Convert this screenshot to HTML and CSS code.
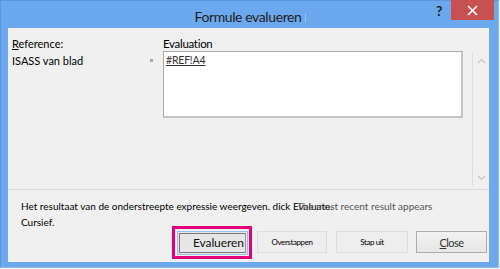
FILE: index.html
```html
<!DOCTYPE html>
<html lang="nl">
<head>
    <meta charset="UTF-8">
    <title>Formule evalueren</title>
    <link rel="stylesheet" href="styles.css">
</head>
<body>

<div class="window">
    <div class="titlebar">
        <div class="title">Formule evalueren<span class="caret"></span></div>
        <div class="help">?</div>
        <div class="close-x">
            <svg width="11" height="11" viewBox="0 0 11 11"><path d="M1 1 L10 10 M10 1 L1 10" stroke="#fff" stroke-width="1.6"/></svg>
        </div>
    </div>

    <div class="client">
        <div class="top">
            <div class="label"><u>R</u>eference:</div>
            <div></div>
            <div class="heading">Evaluation</div>
            <div></div>
            <div class="scroll">
                <svg width="9" height="6" viewBox="0 0 9 6"><path d="M1 5 L4.5 1.5 L8 5" stroke="#c4c4c4" stroke-width="1.2" fill="none"/></svg>
                <svg width="9" height="6" viewBox="0 0 9 6"><path d="M1 1 L4.5 4.5 L8 1" stroke="#c4c4c4" stroke-width="1.2" fill="none"/></svg>
            </div>

            <div class="label sheet">ISASS van blad</div>
            <div class="bullet"><span></span></div>
            <div class="evalbox"><u>#REF!A4</u></div>
        </div>

        <div class="message">
            Het resultaat van de onderstreepte expressie weergeven. dick Evaluate.<br>
            Cursief.
            <span class="ghost">The most recent result appears</span>
        </div>

        <div class="buttons">
            <div class="highlight">
                <button class="btn focus"><span>Evalueren</span></button>
            </div>
            <button class="btn small step-in">Overstappen</button>
            <button class="btn small step-out">Stap uit</button>
            <button class="btn close"><u>C</u>lose</button>
        </div>
    </div>
</div>

</body>
</html>
```

FILE: styles.css
```css
body {
    margin: 0;
    padding: 0;
    background-color: #f3f3f3;
    font-family: Lato, "Open Sans", sans-serif;
    font-size: 11px;
    color: #000;
}
.window {
    width: 497px;
    height: 266px;
    background-color: #6ca8ee;
    border: 1px solid #5b95dc;
    border-right-color: #8fbdf2;
    border-bottom-color: #8fbdf2;
}
.titlebar {
    height: 27px;
    display: flex;
    align-items: flex-start;
}
.title {
    flex: 1;
    padding-left: 64px;
    text-align: center;
    font-size: 14px;
    letter-spacing: -0.4px;
    line-height: 31px;
    color: #1e1e1e;
}
.caret {
    display: inline-block;
    width: 1px;
    height: 9px;
    margin-left: 4px;
    background-color: #9cc3ee;
}
.help {
    width: 12px;
    font-size: 14px;
    font-weight: bold;
    line-height: 20px;
    color: #222;
    margin-right: 3px;
}
.close-x {
    width: 43px;
    height: 20px;
    margin-top: -1px;
    margin-right: 4px;
    background-color: #c75050;
    display: flex;
    align-items: center;
    justify-content: center;
}
.client {
    margin-left: 7px;
    width: 481px;
    height: 234px;
    background-color: #f0f0f0;
}
.top {
    display: grid;
    grid-template-columns: 138px 13px 300px 9px 17px;
    grid-template-rows: 15px 134px;
    padding: 8px 0 0 4px;
    height: 153px;
    border-bottom: 1px solid #dcdcdc;
}
.label {
    line-height: 15px;
}
.sheet {
    padding-top: 2px;
}
.heading {
    font-size: 11.5px;
    letter-spacing: -0.3px;
    line-height: 15px;
}
.bullet {
    padding-top: 8px;
}
.bullet span {
    display: block;
    width: 3px;
    height: 3px;
    background-color: #a8a8a8;
}
.evalbox {
    height: 62px;
    background-color: #fff;
    border: 1px solid #ababab;
    border-right: 2px solid #c4c4c4;
    border-bottom: 2px solid #c4c4c4;
    padding: 1px 2px;
    font-size: 10.5px;
    letter-spacing: -0.2px;
    line-height: 14px;
    color: #333;
}
.scroll {
    grid-row: 1 / 3;
    grid-column: 5;
    margin-top: 16px;
    height: 134px;
    border-left: 1px solid #dedede;
    display: flex;
    flex-direction: column;
    justify-content: space-between;
    align-items: center;
    padding: 6px 0 5px 0;
    box-sizing: border-box;
}
.message {
    position: relative;
    height: 28px;
    padding: 8px 0 0 13px;
    font-size: 10px;
    line-height: 16px;
}
.ghost {
    position: absolute;
    left: 289px;
    top: 8px;
    color: #555;
}
.buttons {
    display: flex;
    align-items: flex-start;
    justify-content: flex-end;
    padding-right: 2px;
}
.highlight {
    border: 3px solid #e4007c;
    padding: 2px 1px 1px 2px;
}
.btn {
    width: 71px;
    height: 22px;
    margin: 5px 0 0 0;
    padding: 0;
    font-family: Lato, "Open Sans", sans-serif;
    background-color: #eeeeee;
    border: 1px solid #dcdcdc;
    color: #000;
}
.small {
    font-size: 8px;
    letter-spacing: -0.4px;
}
.step-in {
    width: 70px;
    margin-left: 5px;
}
.step-out {
    width: 72px;
    margin-left: 9px;
}
.close {
    margin-left: 8px;
    font-size: 11px;
    letter-spacing: -0.6px;
    color: #333;
    border-color: #adadad;
    background: linear-gradient(#f2f2f2, #e6e6e6);
}
.focus {
    margin: 0;
    height: 24px;
    border: 1px solid #8fc1ef;
    padding: 1px;
    background-color: #e6e6e6;
}
.focus span {
    display: block;
    height: 18px;
    border: 1px solid #7a7a7a;
    border-right-color: #9a9a9a;
    font-size: 12px;
    letter-spacing: -0.1px;
    line-height: 18px;
    padding-left: 13px;
    text-align: left;
    color: #111;
}
```
